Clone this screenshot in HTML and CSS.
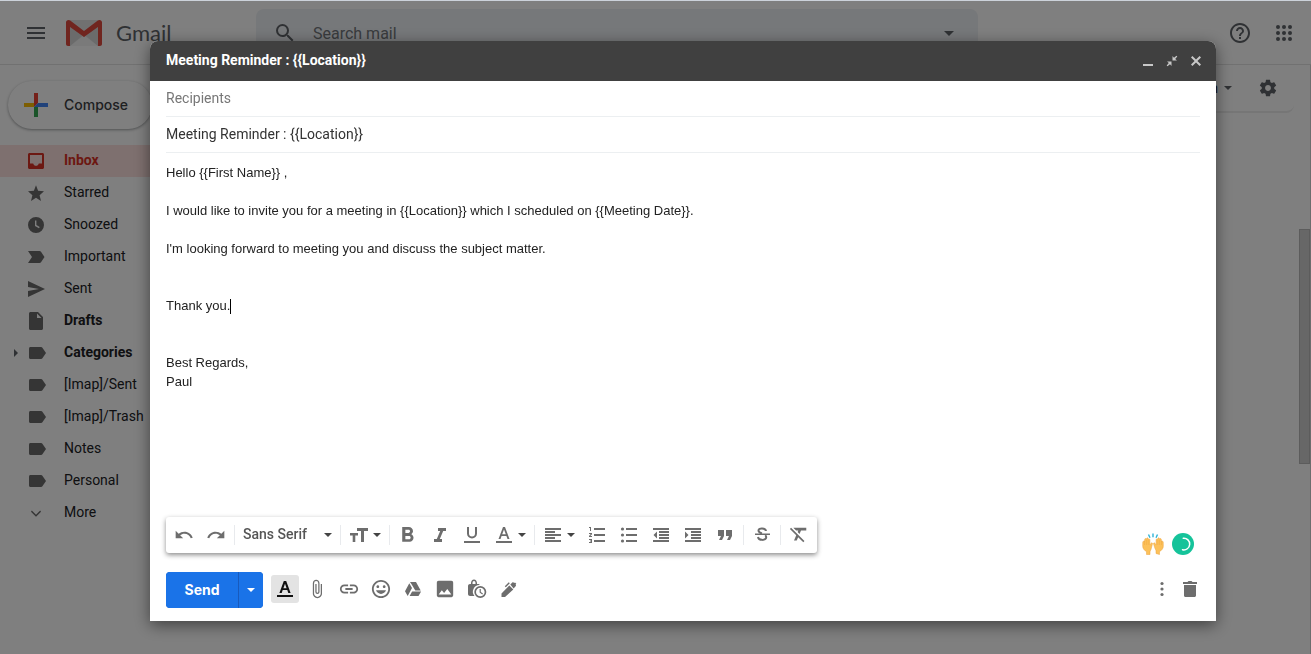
FILE: index.html
```html
<!DOCTYPE html>
<html lang="en">
<head>
    <meta charset="UTF-8">
    <meta name="viewport" content="width=device-width, initial-scale=1.0">
    <title>Gmail</title>
    <link rel="stylesheet" href="styles.css">
</head>
<body>
    <svg class="sprite" aria-hidden="true">
        <symbol id="label" viewBox="0 0 24 24"><path d="M17 6H6.500C5.600 6 5 6.700 5 7.500v9c0 .8.6 1.500 1.500 1.500H17c.6 0 1.100-.3 1.400-.7L22 12l-3.600-5.300C18.100 6.300 17.600 6 17 6z"/></symbol>
        <symbol id="caret" viewBox="0 0 10 10"><path d="M1 3h8L5 7z"/></symbol>
    </svg>

    <div class="page">
        <header class="topbar">
            <button class="icon-button menu-button" aria-label="Main menu">
                <svg viewBox="0 0 24 24"><path d="M3 18h18v-2H3v2zm0-5h18v-2H3v2zm0-7v2h18V6H3z"/></svg>
            </button>
            <a class="logo" href="#">
                <svg class="logo-mark" viewBox="0 0 36 26">
                    <path fill="#e3e3e3" d="M2 0h32v26H2z"/>
                    <path fill="#f5f5f5" d="M4 26L18 14l14 12z"/>
                    <path fill="#cfcfcf" d="M4 7l14 10L32 7v19L18 15 4 26z" opacity=".6"/>
                    <path fill="#e04a3f" d="M0 2.500C0 1 1 0 2.500 0c.7 0 1.200.2 1.700.6L18 11 31.800.6C32.300.2 32.800 0 33.500 0 35 0 36 1 36 2.500V24c0 1.200-.8 2-2 2h-2V7L18 17 4 7v19H2c-1.200 0-2-.8-2-2z"/>
                </svg>
                <span>Gmail</span>
            </a>
            <form class="search">
                <svg viewBox="0 0 24 24"><path d="M15.500 14h-.79l-.28-.27A6.470 6.470 0 0 0 16 9.500 6.500 6.500 0 1 0 9.500 16c1.610 0 3.090-.59 4.230-1.570l.27.28v.79l5 4.990L20.490 19l-4.990-5zm-6 0C7.010 14 5 11.990 5 9.500S7.010 5 9.500 5 14 7.010 14 9.500 11.990 14 9.500 14z"/></svg>
                <input type="text" placeholder="Search mail" aria-label="Search mail">
                <button class="icon-button" type="button" aria-label="Search options">
                    <svg viewBox="0 0 24 24"><path d="M7 10l5 5 5-5z"/></svg>
                </button>
            </form>
            <div class="topbar-right">
                <button class="icon-button" aria-label="Support">
                    <svg viewBox="0 0 24 24"><path d="M11 18h2v-2h-2v2zm1-16C6.480 2 2 6.480 2 12s4.480 10 10 10 10-4.480 10-10S17.520 2 12 2zm0 18c-4.410 0-8-3.590-8-8s3.590-8 8-8 8 3.590 8 8-3.590 8-8 8zm0-14c-2.210 0-4 1.790-4 4h2c0-1.100.9-2 2-2s2 .9 2 2c0 2-3 1.750-3 5h2c0-2.250 3-2.500 3-5 0-2.210-1.790-4-4-4z"/></svg>
                </button>
                <button class="icon-button" aria-label="Google apps">
                    <svg viewBox="0 0 24 24"><g><circle cx="6" cy="6" r="2"/><circle cx="12" cy="6" r="2"/><circle cx="18" cy="6" r="2"/><circle cx="6" cy="12" r="2"/><circle cx="12" cy="12" r="2"/><circle cx="18" cy="12" r="2"/><circle cx="6" cy="18" r="2"/><circle cx="12" cy="18" r="2"/><circle cx="18" cy="18" r="2"/></g></svg>
                </button>
            </div>
        </header>

        <div class="content">
            <aside class="sidebar">
                <button class="compose">
                    <svg viewBox="0 0 24 24"><path fill="#ea4335" d="M10 0h4v10l-4 4z"/><path fill="#34a853" d="M10 14h4v10h-4z"/><path fill="#4285f4" d="M14 10h10v4H10z"/><path fill="#fbbc05" d="M0 10h10v4H0z"/></svg>
                    <span>Compose</span>
                </button>
                <nav class="folders">
                    <a class="folder active" href="#">
                        <svg viewBox="0 0 24 24"><path d="M18.500 4h-13C4.700 4 4 4.700 4 5.500v13c0 .8.7 1.500 1.500 1.500h13c.8 0 1.500-.7 1.500-1.500v-13c0-.8-.7-1.500-1.500-1.500zM18 14.500h-3.200c-.4 1.400-1.500 2.300-2.800 2.300s-2.400-.9-2.800-2.300H6V6h12v8.500z"/></svg>
                        <span>Inbox</span>
                    </a>
                    <a class="folder" href="#">
                        <svg viewBox="0 0 24 24"><path d="M12 16.800L17 20l-1.400-5.800L20 10.200l-5.900-.5L12 4.200 9.900 9.700l-5.900.5 4.400 4L7 20z"/></svg>
                        <span>Starred</span>
                    </a>
                    <a class="folder" href="#">
                        <svg viewBox="0 0 24 24"><path d="M12 4a8 8 0 1 0 0 16 8 8 0 0 0 0-16zm3 11.300l-4-2.400V7.500h1.400v4.600l3.300 2z"/></svg>
                        <span>Snoozed</span>
                    </a>
                    <a class="folder" href="#">
                        <svg viewBox="0 0 24 24"><path d="M4 18h11.500c.7 0 1.200-.3 1.500-.8l3.500-5.200L17 6.800c-.3-.5-.9-.8-1.500-.8H4l4 6z"/></svg>
                        <span>Important</span>
                    </a>
                    <a class="folder" href="#">
                        <svg viewBox="0 0 24 24"><path d="M4 20l17-8L4 4v6l11 2-11 2z"/></svg>
                        <span>Sent</span>
                    </a>
                    <a class="folder bold" href="#">
                        <svg viewBox="0 0 24 24"><path d="M14 3H6.500C5.700 3 5 3.700 5 4.500v15c0 .8.7 1.500 1.500 1.500h11c.8 0 1.500-.7 1.500-1.500V8zm-1 6V4.500L17.500 9z"/></svg>
                        <span>Drafts</span>
                    </a>
                    <a class="folder bold expandable" href="#">
                        <svg><use href="#label"/></svg>
                        <span>Categories</span>
                    </a>
                    <a class="folder" href="#"><svg><use href="#label"/></svg><span>[Imap]/Sent</span></a>
                    <a class="folder" href="#"><svg><use href="#label"/></svg><span>[Imap]/Trash</span></a>
                    <a class="folder" href="#"><svg><use href="#label"/></svg><span>Notes</span></a>
                    <a class="folder" href="#"><svg><use href="#label"/></svg><span>Personal</span></a>
                    <a class="folder" href="#">
                        <svg viewBox="0 0 24 24"><path d="M16.200 9.500L12 13.700 7.800 9.500 7 10.700l5 5 5-5z"/></svg>
                        <span>More</span>
                    </a>
                </nav>
            </aside>
            <main class="mailbox">
                <div class="mailbox-bar">
                    <button class="input-tools" aria-label="Input tools">
                        <span>En</span>
                        <svg><use href="#caret"/></svg>
                    </button>
                    <button class="icon-button settings" aria-label="Settings">
                        <svg viewBox="0 0 24 24"><path d="M19.430 12.980c.04-.32.07-.64.07-.98s-.03-.66-.07-.98l2.110-1.650c.19-.15.24-.42.12-.64l-2-3.460c-.12-.22-.39-.3-.61-.22l-2.490 1c-.52-.4-1.080-.73-1.690-.98l-.38-2.650C14.460 2.180 14.250 2 14 2h-4c-.25 0-.46.18-.49.42l-.38 2.650c-.61.25-1.170.59-1.690.98l-2.490-1c-.23-.09-.49 0-.61.22l-2 3.460c-.13.22-.07.49.12.64l2.110 1.650c-.04.32-.07.65-.07.98s.03.66.07.98l-2.110 1.650c-.19.15-.24.42-.12.64l2 3.460c.12.22.39.3.61.22l2.490-1c.52.4 1.080.73 1.690.98l.38 2.650c.03.24.24.42.49.42h4c.25 0 .46-.18.49-.42l.38-2.650c.61-.25 1.170-.59 1.690-.98l2.490 1c.23.09.49 0 .61-.22l2-3.460c.12-.22.07-.49-.12-.64l-2.110-1.650zM12 15.500c-1.930 0-3.500-1.570-3.500-3.500s1.570-3.500 3.500-3.500 3.500 1.570 3.500 3.500-1.570 3.500-3.500 3.500z"/></svg>
                    </button>
                </div>
                <div class="scroll-thumb"></div>
            </main>
        </div>
    </div>

    <div class="overlay">
        <section class="dialog" role="dialog" aria-labelledby="dialogTitle">
            <header class="dialog-header">
                <h2 id="dialogTitle">Meeting Reminder : {{Location}}</h2>
                <div class="window-buttons">
                    <button aria-label="Minimize"><svg viewBox="0 0 12 12"><path d="M1 9h10v2H1z"/></svg></button>
                    <button aria-label="Exit full screen"><svg viewBox="0 0 12 12"><path d="M6.500 1v4.500H11L9.200 4 11.300 1.500l-.8-.8L8 2.800zM1 6.500l1.800 1.500L.7 10.500l.8.8L4 9.200 5.500 11V6.500z"/></svg></button>
                    <button aria-label="Close"><svg viewBox="0 0 12 12"><path d="M2.400 1L1 2.400 4.600 6 1 9.600 2.400 11 6 7.400 9.600 11 11 9.600 7.400 6 11 2.400 9.600 1 6 4.600z"/></svg></button>
                </div>
            </header>

            <div class="fields">
                <input class="field" type="text" placeholder="Recipients" aria-label="Recipients">
                <input class="field" type="text" value="Meeting Reminder : {{Location}}" aria-label="Subject">
            </div>

            <div class="message-area">
                <div class="message" contenteditable="true" role="textbox" aria-multiline="true" aria-label="Message body" spellcheck="false">
                    <div>Hello {{First Name}} ,</div>
                    <div><br></div>
                    <div>I would like to invite you for a meeting in {{Location}} which I scheduled on {{Meeting Date}}.</div>
                    <div><br></div>
                    <div>I'm looking forward to meeting you and discuss the subject matter.</div>
                    <div><br></div>
                    <div><br></div>
                    <div>Thank you.<span class="cursor"></span></div>
                    <div><br></div>
                    <div><br></div>
                    <div>Best Regards,</div>
                    <div>Paul</div>
                </div>

                <div class="format-bar" role="toolbar" aria-label="Formatting options">
                    <button aria-label="Undo"><svg viewBox="0 0 24 24"><path d="M12.500 8c-2.650 0-5.050.99-6.900 2.600L2 7v9h9l-3.620-3.620c1.390-1.160 3.160-1.880 5.120-1.880 3.540 0 6.550 2.310 7.600 5.500l2.370-.78C21.080 11.030 17.150 8 12.500 8z"/></svg></button>
                    <button aria-label="Redo"><svg viewBox="0 0 24 24"><path d="M18.400 10.600C16.550 8.990 14.150 8 11.500 8c-4.650 0-8.580 3.030-9.960 7.220L3.900 16c1.050-3.190 4.050-5.500 7.600-5.500 1.950 0 3.730.72 5.120 1.880L13 16h9V7l-3.600 3.600z"/></svg></button>
                    <span class="sep"></span>
                    <div class="font-picker">
                        <select aria-label="Font">
                            <option>Sans Serif</option>
                            <option>Serif</option>
                            <option>Fixed Width</option>
                        </select>
                        <svg class="caret"><use href="#caret"/></svg>
                    </div>
                    <span class="sep"></span>
                    <button class="with-caret" aria-label="Size"><svg viewBox="0 0 20 20"><path d="M8 3h11v3h-4v11h-3V6H8zM1 8h8v2.500H6.300V17H3.700v-6.500H1z"/></svg><svg class="caret"><use href="#caret"/></svg></button>
                    <span class="sep"></span>
                    <button aria-label="Bold"><svg viewBox="3 2 19 19"><path d="M15.600 10.790c.97-.67 1.650-1.770 1.650-2.790 0-2.260-1.750-4-4-4H7v14h7.040c2.090 0 3.710-1.700 3.710-3.790 0-1.520-.86-2.820-2.150-3.420zM10 6.500h3c.83 0 1.500.67 1.500 1.500s-.67 1.500-1.500 1.500h-3v-3zm3.500 9H10v-3h3.500c.83 0 1.500.67 1.500 1.500s-.67 1.500-1.500 1.500z"/></svg></button>
                    <button aria-label="Italic"><svg viewBox="2 1 20 20"><path d="M10 4v3h2.210l-3.420 8H6v3h8v-3h-2.210l3.420-8H18V4z"/></svg></button>
                    <button aria-label="Underline"><svg viewBox="0 0 20 20"><path d="M2 16h16v2H2zM5 2h2v6.500a3 3 0 0 0 6 0V2h2v6.500a5 5 0 0 1-10 0z"/></svg></button>
                    <button class="with-caret" aria-label="Text color"><svg viewBox="0 0 20 20"><path d="M2 16h16v2H2zM9 2h2l4.500 12h-2l-1.100-3H7.600l-1.100 3h-2zm1 2.500L8.200 9.300h3.600z"/></svg><svg class="caret"><use href="#caret"/></svg></button>
                    <span class="sep"></span>
                    <button class="with-caret" aria-label="Align"><svg viewBox="0 0 20 20"><path d="M2 3h16v2H2zM2 6h10v2H2zM2 9h16v2H2zM2 12h10v2H2zM2 15h16v2H2z"/></svg><svg class="caret"><use href="#caret"/></svg></button>
                    <button aria-label="Numbered list"><svg viewBox="0 0 20 20"><path d="M7 3h11v2H7zM7 9h11v2H7zM7 15h11v2H7zM2 2h2v4H3V3H2zM2 8h3v1.200L3.300 11H5v1H2v-1l1.700-2H2zM2 14h3v4H2v-1h2v-.5H3v-1h1V15H2z"/></svg></button>
                    <button aria-label="Bulleted list"><svg viewBox="0 0 20 20"><path d="M7 3h11v2H7zM7 9h11v2H7zM7 15h11v2H7z"/><circle cx="3.500" cy="4" r="1.600"/><circle cx="3.500" cy="10" r="1.600"/><circle cx="3.500" cy="16" r="1.600"/></svg></button>
                    <button aria-label="Indent less"><svg viewBox="0 0 20 20"><path d="M2 3h16v2H2zM8 6h10v2H8zM8 9h10v2H8zM8 12h10v2H8zM2 15h16v2H2zM6 6.500v7L2.500 10z"/></svg></button>
                    <button aria-label="Indent more"><svg viewBox="0 0 20 20"><path d="M2 3h16v2H2zM8 6h10v2H8zM8 9h10v2H8zM8 12h10v2H8zM2 15h16v2H2zM2 6.500v7L5.500 10z"/></svg></button>
                    <button aria-label="Quote"><svg viewBox="0 0 20 20"><path d="M3 5h6v6l-2 4H4l2-4H3zM11 5h6v6l-2 4h-3l2-4h-3z"/></svg></button>
                    <span class="sep"></span>
                    <button aria-label="Strikethrough"><svg viewBox="0 0 20 20"><path d="M3 8.500h15V10H3z"/><path class="stroke" d="M14 6c-.4-3.200-7.500-3.600-7.500-.4 0 1.800 1.500 2.400 3.500 2.900M6 12c.5 3.800 8.500 3.800 8.200.2 0-.9-.4-1.500-1-2"/></svg></button>
                    <span class="sep"></span>
                    <button aria-label="Remove formatting"><svg viewBox="1 2 22 22"><path d="M3.270 5L2 6.270l6.970 6.970L6.500 19h3l1.570-3.660L16.730 21 18 19.730 3.550 5.270 3.270 5zM6 5v.18L8.820 8h2.400l-.72 1.680 2.100 2.100L14.210 8H20V5H6z"/></svg></button>
                </div>

                <div class="badges">
                    <svg viewBox="0 0 22 22" aria-hidden="true">
                        <path class="spark" d="M6.500 1.500l1.500 3.200M11 .6v3.600M15.500 1.500l-1.500 3.200"/>
                        <path fill="#fcc15a" stroke="#eda23a" stroke-width=".5" d="M4.500 21.500v-3C2 17.500.6 15 .7 12.800L.8 9c0-1.100 1.400-1.100 1.600 0l.3-2.600c.1-1.100 1.500-1 1.600 0l.3-1c.2-.9 1.500-.8 1.600.2l.2.9c.3-.9 1.500-.7 1.500.4v5l1.200-1.700c.7-.8 1.700 0 1.300.9L9 16.500c-.4.8-.8 1.500-1 2.200v2.800zM17.500 21.500v-3c2.500-1 3.900-3.500 3.800-5.700L21.200 9c0-1.100-1.400-1.100-1.600 0l-.3-2.600c-.1-1.100-1.500-1-1.600 0l-.3-1c-.2-.9-1.500-.8-1.600.2l-.2.9c-.3-.9-1.500-.7-1.500.4v5l-1.200-1.700c-.7-.8-1.700 0-1.300.9l1.400 4.400c.4.8.8 1.500 1 2.200v2.800z"/>
                        <path fill="none" stroke="#eda23a" stroke-width=".4" d="M2.500 8v4M4.400 7v5M6.200 7v5M19.500 8v4M17.600 7v5M15.800 7v5"/>
                    </svg>
                    <svg viewBox="0 0 22 22" aria-hidden="true">
                        <circle cx="11" cy="11" r="11" fill="#15c39a"/>
                        <path fill="none" stroke="#fff" stroke-width="1.500" stroke-linecap="round" d="M11.300 5.300a5.800 5.800 0 1 1-.8 11.400"/>
                    </svg>
                </div>
            </div>

            <footer class="actions">
                <div class="send-group">
                    <button class="send">Send</button>
                    <button class="send-more" aria-label="More send options"><svg><use href="#caret"/></svg></button>
                </div>
                <div class="tools">
                    <button class="selected" aria-label="Formatting options"><svg viewBox="0 0 20 20"><path d="M2 16h16v2H2zM8.800 2h2.400l4.400 12h-2.300l-1-3H7.700l-1 3H4.400zM10 4.700L8.400 9.200h3.200z"/></svg></button>
                    <button aria-label="Attach files"><svg viewBox="0 0 24 24"><path d="M16.500 6v11.500c0 2.210-1.790 4-4 4s-4-1.790-4-4V5a2.500 2.500 0 0 1 5 0v10.500c0 .55-.45 1-1 1s-1-.45-1-1V6H10v9.500a2.500 2.500 0 0 0 5 0V5c0-2.210-1.790-4-4-4S7 2.790 7 5v12.500c0 3.040 2.460 5.500 5.500 5.500s5.500-2.460 5.500-5.500V6h-1.500z"/></svg></button>
                    <button aria-label="Insert link"><svg viewBox="1 1 22 22"><path d="M3.900 12c0-1.710 1.390-3.100 3.100-3.100h4V7H7c-2.760 0-5 2.240-5 5s2.240 5 5 5h4v-1.900H7c-1.710 0-3.100-1.390-3.100-3.100zM8 13h8v-2H8v2zm9-6h-4v1.900h4c1.710 0 3.100 1.390 3.100 3.100s-1.390 3.100-3.100 3.100h-4V17h4c2.760 0 5-2.240 5-5s-2.240-5-5-5z"/></svg></button>
                    <button aria-label="Insert emoji"><svg viewBox="1 1 22 22"><path d="M11.990 2C6.470 2 2 6.480 2 12s4.470 10 9.990 10C17.520 22 22 17.520 22 12S17.520 2 11.990 2zM12 20c-4.420 0-8-3.580-8-8s3.580-8 8-8 8 3.580 8 8-3.580 8-8 8zm3.500-9c.83 0 1.500-.67 1.500-1.500S16.330 8 15.500 8 14 8.670 14 9.500s.67 1.500 1.500 1.500zm-7 0c.83 0 1.500-.67 1.500-1.500S9.330 8 8.500 8 7 8.670 7 9.500 7.670 11 8.500 11zM6.500 13.500c.8 2.300 3 4 5.500 4s4.700-1.700 5.500-4z"/></svg></button>
                    <button aria-label="Insert files using Drive"><svg viewBox="0 0 20 20"><path d="M7 3h6l4.700 8.500h-5.400L8.700 5.500zM6.300 4.200L9 9 4.700 17 2 12.300zM9.800 12.500h8.300L15.500 17H6.600l2.500-4.500z"/></svg></button>
                    <button aria-label="Insert photo"><svg viewBox="1 1 22 22"><path d="M21 19V5c0-1.100-.9-2-2-2H5c-1.100 0-2 .9-2 2v14c0 1.100.9 2 2 2h14c1.100 0 2-.9 2-2zM8.500 13.500l2.500 3 3.500-4.500 4.500 6H5l3.500-4.500z"/></svg></button>
                    <button aria-label="Confidential mode"><svg viewBox="0 0 20 20"><path fill-rule="evenodd" d="M3 5h1V4c0-1.900 1.300-3.500 3-3.500S10 2.100 10 4v1h1c.9 0 1.600.4 1.900 1.100A6.600 6.600 0 0 0 7.500 17H3c-1.100 0-2-.9-2-2V7c0-1.100.9-2 2-2zm2.500 0h3V4c0-1.200-.6-2-1.500-2s-1.500.8-1.500 2z"/><path fill-rule="evenodd" d="M13.300 7a6 6 0 1 0 0 12 6 6 0 0 0 0-12zm0 1.700a4.300 4.300 0 1 1 0 8.600 4.300 4.300 0 0 1 0-8.600z"/><path d="M12.600 10h1.200v3l2.200 1.500-.7 1-2.700-1.900z"/></svg></button>
                    <button aria-label="Insert signature"><svg viewBox="0 0 20 20"><path d="M10.300 6.500l4 4L6 18H2.500v-3.500zM11.300 5.500l1.800-1.800c.5-.5 1.200-.5 1.700 0l.4.4.8-.7 1.300 1.300-.7.8c.5.500.5 1.300 0 1.800l-2 2.200zM9.800 3.200l1 1-4 4-1-1z"/></svg></button>
                </div>
                <div class="more-tools">
                    <button aria-label="More options"><svg viewBox="0 0 20 20"><circle cx="10" cy="4.500" r="1.600"/><circle cx="10" cy="10" r="1.600"/><circle cx="10" cy="15.500" r="1.600"/></svg></button>
                    <button aria-label="Discard draft"><svg viewBox="0 0 20 20"><path d="M4 6h12v10.500c0 .9-.7 1.500-1.500 1.500h-9c-.9 0-1.500-.7-1.500-1.500zM3 3h4.500l1-1h3l1 1H17v2H3z"/></svg></button>
                </div>
            </footer>
        </section>
    </div>
</body>
</html>
```
FILE: styles.css
```css
* {
    box-sizing: border-box;
}
body {
    margin: 0;
    height: 100vh;
    overflow: hidden;
    font-family: Roboto, Arial, sans-serif;
    font-size: 14px;
    color: #202124;
    background-color: #fff;
    border-top: 1px solid #ccd2da;
}
button {
    display: flex;
    align-items: center;
    justify-content: center;
    padding: 0;
    border: none;
    background: none;
    font-family: inherit;
    font-size: 14px;
    color: inherit;
    cursor: pointer;
}
input, select {
    border: none;
    outline: none;
    background: none;
    font-family: inherit;
    color: inherit;
}
a {
    color: inherit;
    text-decoration: none;
}
svg {
    flex: none;
    fill: currentColor;
}
.sprite {
    display: none;
}

/* page behind the dialog */
.page {
    display: flex;
    flex-direction: column;
    height: 100%;
}
.topbar {
    display: flex;
    align-items: center;
    height: 64px;
    padding-right: 5px;
    border-bottom: 1px solid #e2e2e2;
    color: #5f6368;
}
.icon-button {
    width: 44px;
    height: 44px;
}
.icon-button svg, .search > svg {
    width: 24px;
    height: 24px;
}
.menu-button {
    margin: 0 8px 0 14px;
}
.logo {
    display: flex;
    align-items: center;
    gap: 14px;
    width: 190px;
    font-size: 22px;
    font-family: Lato, sans-serif;
}
.logo-mark {
    width: 36px;
    height: 26px;
}
.search {
    display: flex;
    align-items: center;
    flex: 1;
    max-width: 722px;
    height: 48px;
    padding: 0 7px 0 17px;
    border-radius: 8px;
    background-color: #edf0f4;
}
.search input {
    flex: 1;
    padding: 2px 16px 0;
    font-size: 16px;
}
.search input::placeholder {
    color: #72767b;
    opacity: 1;
}
.topbar-right {
    display: flex;
    margin-left: auto;
}
.content {
    display: flex;
    flex: 1;
    min-height: 0;
}
.sidebar {
    width: 256px;
    padding-top: 16px;
}
.compose {
    height: 48px;
    margin: 0 0 16px 8px;
    padding: 0 24px 0 16px;
    gap: 16px;
    border-radius: 24px;
    background-color: #fff;
    box-shadow: 0 1px 2px rgba(60,64,67,0.3), 0 1px 3px 1px rgba(60,64,67,0.15);
    font-family: Inter, sans-serif;
    font-weight: 500;
    color: #3c4043;
}
.compose svg {
    width: 24px;
    height: 24px;
}
.compose span, .folder span {
    padding-bottom: 2px;
}
.folder {
    position: relative;
    display: flex;
    align-items: center;
    gap: 16px;
    height: 32px;
    padding-left: 24px;
}
.folder svg {
    width: 24px;
    height: 24px;
    color: #6a6a6a;
}
.folder.bold {
    font-weight: bold;
}
.folder.active {
    background-color: #fce0de;
    color: #d93025;
    font-weight: bold;
}
.folder.active svg {
    color: #d93025;
}
.expandable::before {
    content: "";
    position: absolute;
    left: 14px;
    border: 4px solid transparent;
    border-left-color: #5f6368;
    border-right: none;
}
.mailbox {
    position: relative;
    flex: 1;
    border-right: 1px solid #dadada;
}
.mailbox-bar {
    display: flex;
    align-items: center;
    justify-content: flex-end;
    height: 48px;
    margin-right: 16px;
    padding-right: 4px;
    border-bottom: 2px solid #ececec;
    border-radius: 0 0 8px 0;
}
.input-tools {
    gap: 5px;
    height: 32px;
}
.input-tools svg {
    width: 10px;
    height: 10px;
    color: #5f6368;
}
.settings {
    margin-left: 13px;
    color: #5f6368;
}
.settings svg {
    width: 20px;
    height: 20px;
}
.scroll-thumb {
    position: absolute;
    top: 25vh;
    right: 0;
    width: 11px;
    height: 36vh;
    border: 1px solid #b9b9b9;
    background-color: #cfcfcf;
}

/* compose dialog */
.overlay {
    position: fixed;
    top: 1px;
    right: 0;
    bottom: 0;
    left: 0;
    display: flex;
    padding: 40px 95px 33px 150px;
    background-color: rgba(0,0,0,0.5);
}
.dialog {
    display: flex;
    flex: 1;
    flex-direction: column;
    min-width: 0;
    border-radius: 8px 8px 0 0;
    background-color: #fff;
    box-shadow: 0 4px 16px rgba(0,0,0,0.5);
}
.dialog-header {
    display: flex;
    align-items: center;
    justify-content: space-between;
    height: 40px;
    padding: 0 8px 0 16px;
    border-radius: 8px 8px 0 0;
    background-color: #404040;
    color: #fff;
}
.dialog-header h2 {
    margin: 0;
    padding-bottom: 2px;
    font-size: 14px;
    font-weight: bold;
}
.window-buttons {
    display: flex;
    color: #c8c8c8;
}
.window-buttons button {
    width: 24px;
    height: 24px;
}
.window-buttons svg {
    width: 12px;
    height: 12px;
}
.fields {
    padding: 0 16px;
}
.field {
    display: block;
    width: 100%;
    height: 36px;
    padding: 0 0 2px;
    border-bottom: 1px solid #eceff1;
    font-size: 14px;
    color: #333;
}
.field::placeholder {
    color: #777;
    opacity: 1;
}
.message-area {
    position: relative;
    display: flex;
    flex: 1;
    flex-direction: column;
    align-items: flex-start;
    min-height: 0;
    padding: 10px 16px 0;
}
.message {
    flex: 1;
    width: 100%;
    min-height: 0;
    overflow: auto;
    outline: none;
    font-family: "Liberation Sans", Arial, sans-serif;
    font-size: 13px;
    line-height: 19px;
    color: #222;
}
.cursor {
    display: inline-block;
    width: 1px;
    height: 15px;
    background-color: #000;
    vertical-align: middle;
}
.format-bar {
    display: flex;
    align-items: center;
    height: 36px;
    padding: 0 2px;
    border-radius: 3px;
    background-color: #fff;
    box-shadow: 0 2px 5px rgba(0,0,0,0.45);
    color: #6d6d6d;
}
.format-bar button {
    width: 32px;
    height: 32px;
}
.format-bar svg {
    width: 20px;
    height: 20px;
}
.format-bar .with-caret {
    width: 44px;
    justify-content: flex-start;
    padding-left: 6px;
    gap: 3px;
}
.format-bar .caret {
    width: 10px;
    height: 10px;
    color: #444;
}
.stroke {
    fill: none;
    stroke: currentColor;
    stroke-width: 2;
}
.sep {
    width: 1px;
    height: 20px;
    margin: 0 2px;
    background-color: #e8eaed;
}
.font-picker {
    position: relative;
    width: 101px;
}
.font-picker select {
    width: 100%;
    height: 32px;
    padding: 0 16px 2px 6px;
    appearance: none;
    font-size: 14px;
    font-weight: 500;
    color: #555;
}
.font-picker .caret {
    position: absolute;
    top: 11px;
    right: 5px;
    pointer-events: none;
}
.badges {
    position: absolute;
    right: 22px;
    bottom: -2px;
    display: flex;
    gap: 8px;
}
.badges svg {
    width: 22px;
    height: 22px;
}
.spark {
    fill: none;
    stroke: #2fb3d6;
    stroke-width: 1.4;
}
.actions {
    display: flex;
    align-items: center;
    margin-top: 19px;
    padding: 0 12px 13px 16px;
    color: #6d6d6d;
}
.actions svg {
    width: 20px;
    height: 20px;
}
.send-group {
    display: flex;
    gap: 1px;
    height: 36px;
    overflow: hidden;
    border-radius: 4px;
    background-color: #185abc;
    color: #fff;
}
.send {
    width: 72px;
    padding-bottom: 2px;
    background-color: #1a73e8;
    font-family: Inter, sans-serif;
    font-weight: bold;
}
.send-more {
    width: 24px;
    background-color: #1a73e8;
}
.actions .send-more svg {
    width: 10px;
    height: 10px;
}
.tools, .more-tools {
    display: flex;
    padding-bottom: 2px;
}
.tools {
    gap: 4px;
    margin-left: 8px;
}
.tools button, .more-tools button {
    width: 28px;
    height: 28px;
}
.tools .selected {
    border-radius: 3px;
    background-color: #e3e3e3;
    color: #111;
}
.more-tools {
    margin-left: auto;
}
```
